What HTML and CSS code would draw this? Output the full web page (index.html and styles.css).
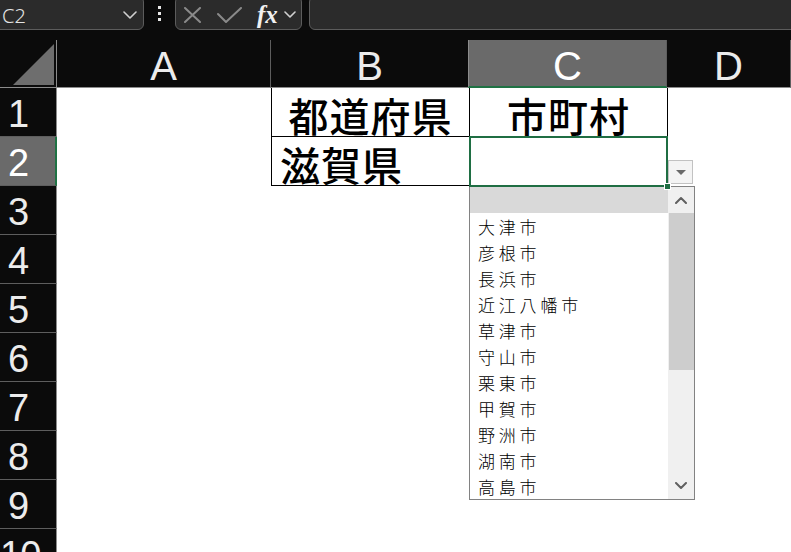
FILE: index.html
```html
<!DOCTYPE html>
<html lang="ja">
    <head>
        <meta charset="UTF-8">
        <meta name="viewport" content="width=device-width, initial-scale=1.0">
        <title>Book1 - Excel</title>
        <link rel="stylesheet" href="styles.css">
    </head>
    <body>
        <!-- formula bar -->
        <div class="topbar">
            <div class="namebox">
                <span>C2</span>
                <svg class="chev" width="14" height="8" viewBox="0 0 14 8"><path d="M1 1 L7 7 L13 1" /></svg>
            </div>
            <div class="grip"><i></i><i></i><i></i></div>
            <div class="fxtools">
                <svg class="tool" width="17" height="16" viewBox="0 0 17 16"><path d="M1 1 L16 15 M16 1 L1 15" /></svg>
                <svg class="tool" width="25" height="16" viewBox="0 0 25 16"><path d="M1 7 L9 15 L24 1" /></svg>
                <span class="fx">fx</span>
                <svg class="chev small" width="12" height="8" viewBox="0 0 12 8"><path d="M1 1 L6 6 L11 1" /></svg>
            </div>
            <div class="formula"></div>
        </div>

        <!-- grid -->
        <div class="sheet">
            <div class="corner"><div class="tri"></div></div>
            <div class="colhead">A</div>
            <div class="colhead">B</div>
            <div class="colhead active">C</div>
            <div class="colhead">D</div>

            <div class="rowhead">1</div>
            <div class="cell"></div>
            <div class="cell box big center">都道府県</div>
            <div class="cell box big center">市町村</div>
            <div class="cell edge"></div>

            <div class="rowhead active">2</div>
            <div class="cell"></div>
            <div class="cell box big">滋賀県</div>
            <div class="cell selected">
                <div class="sel"><div class="handle"></div></div>
                <div class="dropbtn"><span class="tri-down"></span></div>
                <div class="droplist">
                    <ul class="items">
                        <li class="hl"></li>
                        <li>大津市</li>
                        <li>彦根市</li>
                        <li>長浜市</li>
                        <li>近江八幡市</li>
                        <li>草津市</li>
                        <li>守山市</li>
                        <li>栗東市</li>
                        <li>甲賀市</li>
                        <li>野洲市</li>
                        <li>湖南市</li>
                        <li>高島市</li>
                    </ul>
                    <div class="scroll">
                        <div class="arrow"><svg width="12" height="8" viewBox="0 0 12 8"><path d="M1 7 L6 2 L11 7" /></svg></div>
                        <div class="track"><div class="thumb"></div></div>
                        <div class="arrow"><svg width="12" height="8" viewBox="0 0 12 8"><path d="M1 1 L6 6 L11 1" /></svg></div>
                    </div>
                </div>
            </div>
            <div class="cell"></div>

            <div class="rowhead">3</div><div class="cell"></div><div class="cell"></div><div class="cell"></div><div class="cell"></div>
            <div class="rowhead">4</div><div class="cell"></div><div class="cell"></div><div class="cell"></div><div class="cell"></div>
            <div class="rowhead">5</div><div class="cell"></div><div class="cell"></div><div class="cell"></div><div class="cell"></div>
            <div class="rowhead">6</div><div class="cell"></div><div class="cell"></div><div class="cell"></div><div class="cell"></div>
            <div class="rowhead">7</div><div class="cell"></div><div class="cell"></div><div class="cell"></div><div class="cell"></div>
            <div class="rowhead">8</div><div class="cell"></div><div class="cell"></div><div class="cell"></div><div class="cell"></div>
            <div class="rowhead">9</div><div class="cell"></div><div class="cell"></div><div class="cell"></div><div class="cell"></div>
            <div class="rowhead">10</div><div class="cell"></div><div class="cell"></div><div class="cell"></div><div class="cell"></div>
        </div>
    </body>
</html>
```

FILE: styles.css
```css
body {
    margin: 0;
    padding: 0;
    background-color: #0b0b0b;
    font-family: "Liberation Sans", Arial, sans-serif;
    overflow: hidden;
    height: 552px;
}

/* formula bar */

.topbar {
    display: flex;
    height: 30px;
    overflow: hidden;
}

.namebox,
.fxtools,
.formula {
    box-sizing: border-box;
    height: 34px;
    margin-top: -4px;
    background-color: #2b2b2b;
    border: 1px solid #5c5c5c;
    border-radius: 6px;
}

.namebox {
    width: 152px;
    margin-left: -8px;
    padding: 4px 6px 0 9px;
    display: flex;
    align-items: center;
    justify-content: space-between;
    color: #e4e4e4;
    font-family: "Noto Sans", sans-serif;
    font-weight: 300;
    font-size: 20px;
}

.chev path,
.tool path,
.scroll path {
    fill: none;
    stroke-linecap: round;
    stroke-linejoin: round;
}

.chev path {
    stroke: #d0d0d0;
    stroke-width: 1.6;
}

.grip {
    width: 31px;
    display: flex;
    flex-direction: column;
    align-items: center;
    justify-content: center;
    gap: 3px;
    padding-bottom: 4px;
    box-sizing: border-box;
}

.grip i {
    width: 3px;
    height: 3px;
    background-color: #e8e8e8;
}

.fxtools {
    width: 127px;
    display: flex;
    align-items: center;
    padding: 4px 0 0 8px;
}

.tool path {
    stroke: #8a8a8a;
    stroke-width: 2;
}

.tool + .tool {
    margin-left: 16px;
}

.fx {
    margin-left: 15px;
    color: #f0f0f0;
    font-family: "Liberation Serif", serif;
    font-style: italic;
    font-weight: bold;
    font-size: 25px;
    line-height: 20px;
}

.chev.small {
    margin-left: 6px;
}

.formula {
    flex: 1;
    margin-left: 7px;
    margin-right: -8px;
}

/* sheet */

.sheet {
    margin-top: 10px;
    display: grid;
    grid-template-columns: 57px 214px 198px 198px 1fr;
    grid-template-rows: 48px repeat(10, 49px);
}

.corner {
    box-sizing: border-box;
    border-right: 1px solid #8c8c8c;
    border-bottom: 1px solid #8c8c8c;
    display: flex;
    align-items: flex-end;
    justify-content: flex-end;
    padding: 0 2px 2px 0;
}

.tri {
    width: 41px;
    height: 41px;
    background-color: #6e6e6e;
    clip-path: polygon(100% 0, 100% 100%, 0 100%);
}

.colhead {
    box-sizing: border-box;
    border-right: 1px solid #5e5e5e;
    border-bottom: 1px solid #8c8c8c;
    color: #ececec;
    font-size: 40px;
    text-align: center;
    line-height: 52px;
}

.colhead.active {
    background-color: #6a6a6a;
    border-left: 1px solid #8c8c8c;
    border-bottom: 2px solid #1f7244;
    color: #ffffff;
    margin-left: -1px;
}

.rowhead {
    box-sizing: border-box;
    border-right: 1px solid #8c8c8c;
    border-bottom: 1px solid #5e5e5e;
    padding-right: 20px;
    color: #ececec;
    font-size: 38px;
    text-align: center;
    line-height: 52px;
    letter-spacing: -1px;
    overflow: hidden;
}

.rowhead.active {
    background-color: #6a6a6a;
    border-right: 2px solid #1f7244;
    padding-right: 19px;
    color: #ffffff;
}

.cell {
    box-sizing: border-box;
    background-color: #ffffff;
    position: relative;
}

.box {
    border-left: 1px solid #000;
    border-bottom: 1px solid #000;
}

.edge {
    border-left: 1px solid #000;
}

.big {
    display: flex;
    align-items: center;
    padding: 5px 0 0 8px;
    font-family: "Noto Sans CJK JP", sans-serif;
    font-weight: 500;
    font-size: 40px;
    line-height: 40px;
    letter-spacing: 1px;
    color: #000;
    white-space: nowrap;
}

.big.center {
    justify-content: center;
    padding-left: 0;
}

/* active cell with its list */

.sel {
    position: absolute;
    top: -1px;
    left: 0;
    right: -1px;
    bottom: -1px;
    border: 2px solid #1f6e43;
    z-index: 3;
}

.handle {
    position: absolute;
    right: -5px;
    bottom: -5px;
    width: 5px;
    height: 5px;
    background-color: #1f6e43;
    border: 1px solid #ffffff;
}

.dropbtn {
    position: absolute;
    left: 199px;
    top: 23px;
    width: 25px;
    height: 24px;
    box-sizing: border-box;
    border: 1px solid #c2c2c2;
    background-color: #f4f4f4;
    display: flex;
    align-items: center;
    justify-content: center;
    z-index: 2;
}

.tri-down {
    width: 0;
    height: 0;
    border-left: 5px solid transparent;
    border-right: 5px solid transparent;
    border-top: 5px solid #6a6a6a;
}

.droplist {
    position: absolute;
    top: 49px;
    left: 0;
    width: 226px;
    height: 314px;
    box-sizing: border-box;
    border: 1px solid #828282;
    background-color: #ffffff;
    display: flex;
    z-index: 2;
}

.items {
    list-style: none;
    margin: 0;
    padding: 0;
    width: 198px;
}

.items li {
    height: 26px;
    line-height: 27px;
    padding-left: 8px;
    font-family: "Noto Sans CJK JP", sans-serif;
    font-weight: 300;
    font-size: 17px;
    letter-spacing: 3.8px;
    color: #000;
}

.items li.hl {
    background-color: #d9d9d9;
}

.scroll {
    flex: 1;
    display: flex;
    flex-direction: column;
    background-color: #f0f0f0;
}

.arrow {
    height: 26px;
    display: flex;
    align-items: center;
    justify-content: center;
}

.scroll path {
    stroke: #606060;
    stroke-width: 2;
}

.track {
    flex: 1;
    padding-left: 1px;
}

.thumb {
    height: 157px;
    background-color: #cdcdcd;
}
```
